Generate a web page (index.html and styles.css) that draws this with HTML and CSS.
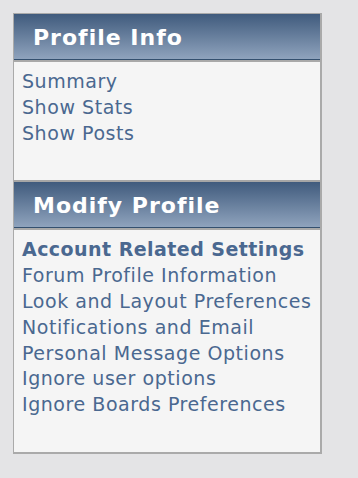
FILE: index.html
```html
<!DOCTYPE html>
<html lang="en">
<head>
  <meta charset="UTF-8">
  <title>Profile</title>
  <meta name="viewport" content="width=device-width, initial-scale=1.0">
  <link rel="stylesheet" href="styles.css">
</head>
<body>

<aside class="sidebar">
  <section class="menu">
    <h3 class="menu-title">Profile Info</h3>
    <ul class="menu-links">
      <li><a href="#">Summary</a></li>
      <li><a href="#">Show Stats</a></li>
      <li><a href="#">Show Posts</a></li>
    </ul>
  </section>

  <section class="menu">
    <h3 class="menu-title">Modify Profile</h3>
    <ul class="menu-links">
      <li><a href="#" class="active">Account Related Settings</a></li>
      <li><a href="#">Forum Profile Information</a></li>
      <li><a href="#">Look and Layout Preferences</a></li>
      <li><a href="#">Notifications and Email</a></li>
      <li><a href="#">Personal Message Options</a></li>
      <li><a href="#">Ignore user options</a></li>
      <li><a href="#">Ignore Boards Preferences</a></li>
    </ul>
  </section>
</aside>

</body>
</html>
```

FILE: styles.css
```css
* { box-sizing: border-box; }
body { margin: 0; padding: 13px; background: #e4e4e6; font-family: "DejaVu Sans", Verdana, sans-serif; }

.sidebar {
  width: 309px; background: #f5f5f5;
  border: solid #aaa; border-width: 1px 2px 2px 1px;
}
.menu + .menu { border-top: 2px solid #a6a6a6; }

.menu-title {
  margin: 0; height: 46px; padding: 10px 0 0 19px;
  font-size: 22px; font-weight: bold; color: #fff; line-height: 28px; letter-spacing: 1px;
  background: linear-gradient(#405b7d, #8fa3bd);
  border-bottom: 1px solid #34506f;
  box-shadow: 0 2px 0 #a9a9a9;
  margin-bottom: 2px;
}

.menu-links { list-style: none; margin: 0; padding: 7px 8px 34px; }
.menu-links li { font-size: 19px; line-height: 25.8px; letter-spacing: 0.55px; }
.menu-links a { color: #4a6890; text-decoration: none; }
.menu-links a.active { font-weight: bold; letter-spacing: 0.45px; }
```
